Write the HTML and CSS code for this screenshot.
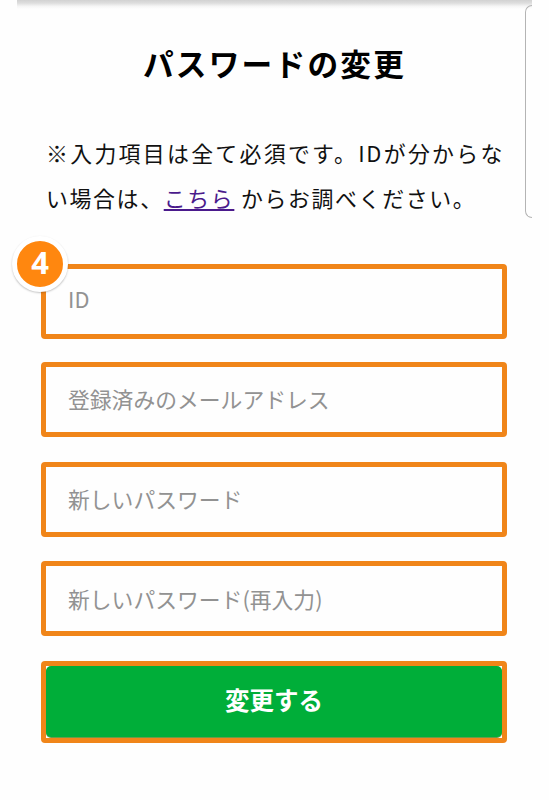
FILE: index.html
```html
<!DOCTYPE html>
<html lang="ja">
<head>
  <meta charset="UTF-8">
  <meta name="viewport" content="width=device-width, initial-scale=1.0">
  <title>パスワードの変更</title>
  <link rel="stylesheet" href="styles.css">
</head>
<body>
  <div class="screen">
    <div class="top-shadow"></div>
    <div class="edge-handle"></div>

    <h1 class="title">パスワードの変更</h1>
    <div class="lead">
      <p class="lead-full">※入力項目は全て必須です。IDが分からな</p>
      <p>い場合は、<a class="link" href="#">こちら</a> からお調べください。</p>
    </div>

    <form class="form">
      <div class="field field-id">
        <span class="step">4</span>
        <input type="text" placeholder="ID">
      </div>
      <div class="field">
        <input type="email" placeholder="登録済みのメールアドレス">
      </div>
      <div class="field">
        <input type="password" placeholder="新しいパスワード">
      </div>
      <div class="field field-confirm">
        <input type="password" placeholder="新しいパスワード(再入力)">
      </div>
      <div class="submit">
        <button type="button">変更する</button>
      </div>
    </form>
  </div>
</body>
</html>
```

FILE: styles.css
```css
* {
  margin: 0;
  padding: 0;
  box-sizing: border-box;
}

body {
  width: 549px;
  height: 800px;
  overflow: hidden;
  background: #fefefe;
  color: #111;
  font-family: "Noto Sans CJK JP", sans-serif;
}

.screen {
  position: relative;
  width: 515px;
  height: 800px;
  margin-left: 17px;
  padding: 0 25px 0 24px;
}

.top-shadow {
  position: absolute;
  top: 0;
  left: 0;
  width: 100%;
  height: 9px;
  background: linear-gradient(#d2d2d2, #dedede 35%, #f6f6f6 70%, #fefefe);
}

/* right edge panel of the phone */
.edge-handle {
  position: absolute;
  top: 5px;
  right: 0;
  width: 7px;
  height: 213px;
  border: 1px solid #b4b4b4;
  border-right: none;
  border-radius: 8px 0 0 8px;
}

.title {
  padding-top: 41px;
  height: 130px;
  padding-left: 1px;
  font-size: 30.7px;
  line-height: 44px;
  letter-spacing: 2.2px;
  text-align: center;
  color: #000;
}

.lead {
  width: 463px;
  height: 134px;
  padding-left: 5px;
  font-size: 21.9px;
  line-height: 45px;
  letter-spacing: 1.65px;
}

.lead-full {
  text-align-last: justify;
}

.link {
  color: #4a1a8c;
  text-decoration: underline;
}

.form {
  display: grid;
  grid-template-rows: 98px 100px 99px 100px 82px;
}

.field,
.submit {
  position: relative;
  border: 5px solid #f08519;
  border-radius: 4px;
}

.field {
  height: 75px;
}

.field input {
  display: block;
  width: 100%;
  height: 100%;
  padding: 0 22px 3px;
  border: none;
  background: #fefefe;
  font-family: inherit;
  font-size: 21.8px;
  color: #111;
}

.field input::placeholder {
  color: #929292;
}

.field-id input {
  padding-bottom: 6px;
}

.field-confirm input {
  padding-bottom: 0;
}

.step {
  position: absolute;
  top: -33px;
  left: -34px;
  width: 56px;
  height: 56px;
  border: 5px solid #fff;
  border-radius: 50%;
  background: #ff870f;
  box-shadow: 0 1px 2px rgba(0, 0, 0, 0.25);
  color: #fff;
  font-family: "Noto Sans", sans-serif;
  font-size: 31px;
  font-weight: bold;
  line-height: 43px;
  text-align: center;
}

.submit {
  background: #fff;
}

.submit button {
  display: block;
  width: 100%;
  height: 71px;
  padding-bottom: 5px;
  border: none;
  border-radius: 5px;
  background: #00ae39;
  box-shadow: 0 1px 0 #6b9a48;
  color: #fff;
  font-family: inherit;
  font-size: 24.5px;
  font-weight: bold;
}
```
